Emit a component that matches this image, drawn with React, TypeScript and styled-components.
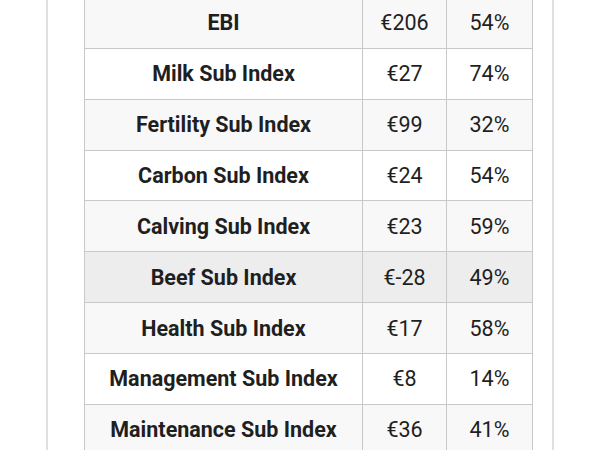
import React from "react";
import styled, { createGlobalStyle } from "styled-components";

const Global = createGlobalStyle`
  html, body { margin: 0; padding: 0; background: #ffffff; }
  body { font-family: Roboto, "Liberation Sans", Arial, sans-serif; color: #1f1f1f; }
`;

const Page = styled.div`
  width: 600px;
  height: 450px;
  overflow: hidden;
  background: #ffffff;
`;

const Panel = styled.div`
  margin-left: 46px;
  width: 508px;
  height: 460px;
  border-left: 2px solid #e0e0e0;
  border-right: 2px solid #e0e0e0;
  background: #ffffff;
  display: flex;
  padding-left: 36px;
  box-sizing: border-box;
`;

const Table = styled.table`
  border-collapse: collapse;
  margin-top: -3px;
  width: 449px;
  height: fit-content;
  font-size: 21.5px;
`;

const Row = styled.tr<{ $tone: "light" | "white" | "hi" }>`
  height: 50.86px;
  background: ${(p) =>
    p.$tone === "light" ? "#f8f8f8" : p.$tone === "hi" ? "#ededed" : "#ffffff"};
`;

const NameCell = styled.th`
  border: 1px solid #c8c8c8;
  font-weight: 700;
  text-align: center;
  padding: 0;
  font-size: 21.5px;
`;

const ValueCell = styled.td`
  border: 1px solid #c8c8c8;
  text-align: center;
  padding: 0;
  font-weight: 400;
`;

const rows: { name: string; value: string; pct: string; tone: "light" | "white" | "hi" }[] = [
  { name: "EBI", value: "€206", pct: "54%", tone: "light" },
  { name: "Milk Sub Index", value: "€27", pct: "74%", tone: "white" },
  { name: "Fertility Sub Index", value: "€99", pct: "32%", tone: "light" },
  { name: "Carbon Sub Index", value: "€24", pct: "54%", tone: "white" },
  { name: "Calving Sub Index", value: "€23", pct: "59%", tone: "light" },
  { name: "Beef Sub Index", value: "€-28", pct: "49%", tone: "hi" },
  { name: "Health Sub Index", value: "€17", pct: "58%", tone: "light" },
  { name: "Management Sub Index", value: "€8", pct: "14%", tone: "white" },
  { name: "Maintenance Sub Index", value: "€36", pct: "41%", tone: "light" },
];

export default function App() {
  return (
    <Page>
      <Global />
      <Panel>
        <Table>
          <colgroup>
            <col style={{ width: 278 }} />
            <col style={{ width: 84 }} />
            <col style={{ width: 86 }} />
          </colgroup>
          <tbody>
            {rows.map((r) => (
              <Row key={r.name} $tone={r.tone}>
                <NameCell>{r.name}</NameCell>
                <ValueCell>{r.value}</ValueCell>
                <ValueCell>{r.pct}</ValueCell>
              </Row>
            ))}
          </tbody>
        </Table>
      </Panel>
    </Page>
  );
}
